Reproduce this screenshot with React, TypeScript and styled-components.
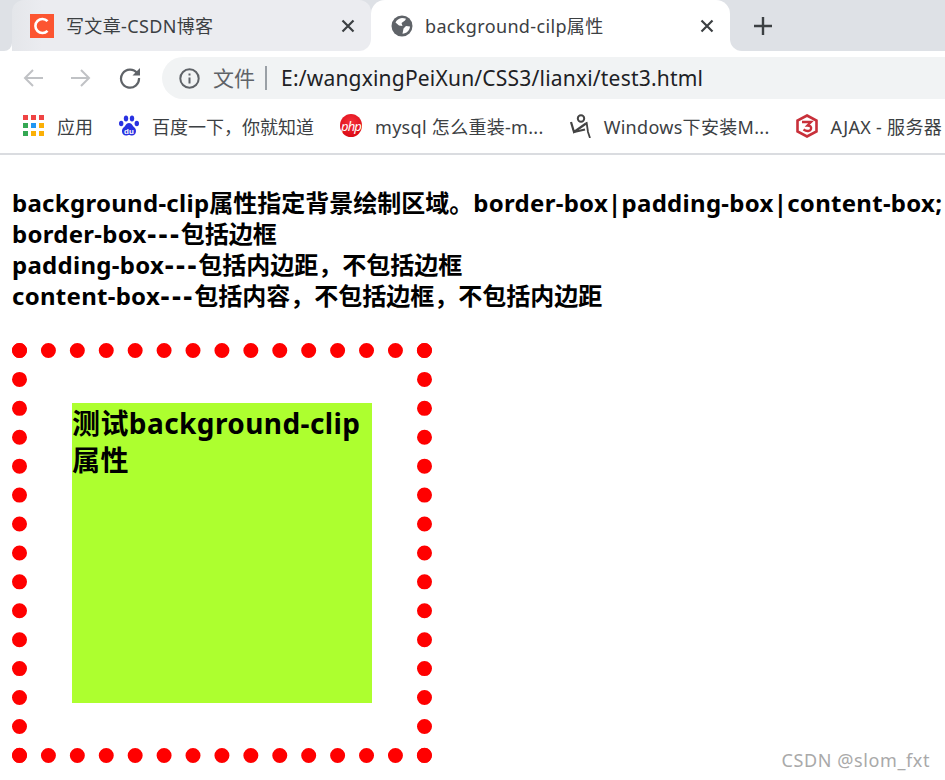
import React from "react";
import styled, { createGlobalStyle } from "styled-components";

const FONT = `"Noto Sans", "Noto Sans CJK SC", sans-serif`;

const GlobalStyle = createGlobalStyle`
  html, body {
    margin: 0;
    padding: 0;
    background: #fff;
  }
  body {
    font-family: ${FONT};
    overflow: hidden;
  }
`;

const Window = styled.div`
  position: relative;
  width: 945px;
  height: 780px;
  overflow: hidden;
  background: #fff;
`;

const TabStrip = styled.div`
  display: flex;
  height: 51px;
  background: linear-gradient(#dee1e6 38px, #fff 38px);
`;

const StripEdge = styled.div`
  width: 12px;
  background: #dee1e6;
  border-radius: 0 0 8px 0;
`;

const Tab = styled.div<{ $active?: boolean }>`
  display: flex;
  align-items: center;
  box-sizing: border-box;
  width: 359px;
  padding: 0 16px 0 ${(p) => (p.$active ? 20 : 18)}px;
  background: ${(p) =>
    p.$active ? "#fff" : "linear-gradient(90deg, #e4e6ea, #ebecf0 30px)"};
  border-radius: ${(p) => (p.$active ? "14px 14px 0 0" : "12px 12px 12px 0")};
`;

const TabTitle = styled.span`
  flex: 1;
  margin: 0 0 2px 12px;
  font-size: 18px;
  letter-spacing: 0.35px;
  color: #3c4043;
  white-space: nowrap;
`;

const StripRest = styled.div`
  flex: 1;
  display: flex;
  align-items: center;
  padding-left: 24px;
  background: #dee1e6;
  border-radius: 0 0 0 12px;
`;

const Toolbar = styled.div`
  display: flex;
  align-items: center;
  height: 57px;
  padding: 0 0 3px 23px;
  box-sizing: border-box;
`;

const NavIcons = styled.div`
  display: flex;
  align-items: center;
  gap: 28px;
  margin-right: 21px;
`;

const AddressBar = styled.div`
  flex: 1;
  display: flex;
  align-items: center;
  height: 42px;
  padding-left: 17px;
  background: #f1f3f4;
  border-radius: 21px 0 0 21px;
`;

const SchemeLabel = styled.span`
  margin-left: 13px;
  padding-right: 10px;
  font-size: 21px;
  line-height: 24px;
  color: #5f6368;
  border-right: 2px solid #9aa0a6;
`;

const UrlText = styled.span`
  margin-left: 14px;
  font-size: 21px;
  letter-spacing: 0.2px;
  color: #202124;
  white-space: nowrap;
`;

const BookmarkBar = styled.div`
  display: flex;
  align-items: center;
  gap: 26px;
  height: 47px;
  padding: 0 0 10px 23px;
  box-sizing: border-box;
  border-bottom: 2px solid #dadce0;
  overflow: hidden;
`;

const Bookmark = styled.div<{ $latin?: boolean }>`
  display: flex;
  align-items: center;
  flex-shrink: 0;
  gap: 13px;
  font-size: 18px;
  letter-spacing: ${(p) => (p.$latin ? "0.3px" : "0")};
  color: #3c4043;
  white-space: nowrap;
`;

const PhpBadge = styled.span`
  display: flex;
  align-items: center;
  justify-content: center;
  width: 22px;
  height: 23px;
  border-radius: 50%;
  background: radial-gradient(circle at 50% 35%, #f5303a, #d4000c);
  color: #fff;
  font-size: 13px;
  font-style: italic;
  letter-spacing: -0.8px;
`;

const Page = styled.main`
  padding: 32px 0 0 12px;
  color: #000;
  font-weight: 700;
`;

const Description = styled.p`
  margin: 0 0 32px;
  font-size: 24px;
  line-height: 31px;
  white-space: nowrap;
`;

const Latin = styled.span`
  letter-spacing: 0.28px;
`;

const Dashes = styled.span`
  font-family: "DejaVu Sans", sans-serif;
  line-height: 0;
  letter-spacing: 1.4px;
`;

const ClipDemo = styled.div`
  box-sizing: border-box;
  width: 420px;
  height: 420px;
  padding: 45px;
  border: 15px dotted #f00;
  background: #adff2f;
  background-clip: content-box;
  font-size: 28px;
  line-height: 37px;
`;

const ClipDemoText = styled.div`
  padding-top: 2px;
  letter-spacing: 0.42px;
`;

const Watermark = styled.span`
  position: absolute;
  right: 15px;
  bottom: 8px;
  font-size: 18px;
  color: #a9a9a9;
  letter-spacing: 0.6px;
`;

const CsdnIcon = () => (
  <svg width="24" height="24" viewBox="0 0 24 24">
    <rect width="24" height="24" fill="#fc5531" />
    <path d="M17.5 7.2A7 7 0 1 0 17.5 16.8" fill="none" stroke="#fff" strokeWidth="2.6" />
  </svg>
);

const GlobeIcon = () => (
  <svg width="22" height="22" viewBox="0 0 22 22">
    <circle cx="11" cy="11" r="10.5" fill="#5f6368" />
    <path
      d="M11 3C8 3.4 5.5 5 4.5 7.5L8 10.5 11.5 11 10.5 8 14 5.5 15 3.8C13.7 3.2 12.4 3 11 3ZM19 11.5L15 11 12.5 13.5 11.5 18.8C15.5 18.5 18.7 15.5 19 11.5Z"
      fill="#fff"
    />
  </svg>
);

const CloseIcon = () => (
  <svg width="14" height="14" viewBox="0 0 14 14">
    <path d="M1.5 1.5L12.5 12.5M12.5 1.5L1.5 12.5" stroke="#3c4043" strokeWidth="2.2" />
  </svg>
);

const PlusIcon = () => (
  <svg width="18" height="18" viewBox="0 0 18 18">
    <path d="M9 0V18M0 9H18" stroke="#3c4043" strokeWidth="2.4" />
  </svg>
);

const ArrowIcon = ({ flip }: { flip?: boolean }) => (
  <svg width="20" height="20" viewBox="0 0 20 20" style={flip ? { transform: "scaleX(-1)" } : undefined}>
    <path d="M20 10H2M10 2L2 10L10 18" fill="none" stroke="#c0c2c5" strokeWidth="2" />
  </svg>
);

const ReloadIcon = () => (
  <svg width="22" height="22" viewBox="0 0 22 22">
    <path d="M18.2 6.2A9 9 0 1 0 20 11" fill="none" stroke="#5f6368" strokeWidth="2.2" />
    <path d="M21 1V8.5H13.5Z" fill="#5f6368" />
  </svg>
);

const InfoIcon = () => (
  <svg width="21" height="21" viewBox="0 0 21 21">
    <circle cx="10.5" cy="10.5" r="9.2" fill="none" stroke="#5f6368" strokeWidth="2" />
    <path d="M10.5 9.5V15.5M10.5 5.5V7.6" stroke="#5f6368" strokeWidth="2" />
  </svg>
);

const APP_COLORS = [
  "#ef4444", "#ef4444", "#ef4444",
  "#34a853", "#2196f3", "#fbb006",
  "#34a853", "#fbb006", "#fbb006",
];

const AppsIcon = () => (
  <svg width="21" height="21" viewBox="0 0 21 21">
    {APP_COLORS.map((color, i) => (
      <rect key={i} x={(i % 3) * 8} y={Math.floor(i / 3) * 8} width="5" height="5" fill={color} />
    ))}
  </svg>
);

const BaiduIcon = () => (
  <svg width="20" height="22" viewBox="0 0 20 22">
    <g fill="#2932e1">
      <ellipse cx="7" cy="3.5" rx="2.2" ry="3" />
      <ellipse cx="13" cy="3.5" rx="2.2" ry="3" />
      <ellipse cx="2.2" cy="8.5" rx="2.2" ry="2.8" />
      <ellipse cx="17.8" cy="8.5" rx="2.2" ry="2.8" />
      <path d="M10 8C7 8 6.5 11 4.5 12.5 2 14.5 2.5 20.5 7 20.5 8.5 20.5 9 20 10 20S11.5 20.5 13 20.5C17.5 20.5 18 14.5 15.5 12.5 13.5 11 13 8 10 8Z" />
    </g>
    <text x="10" y="18.5" textAnchor="middle" fontSize="8" fontWeight="700" fill="#fff" fontFamily="Liberation Sans, sans-serif">du</text>
  </svg>
);

const FigureIcon = () => (
  <svg width="21" height="24" viewBox="0 0 21 24">
    <g fill="none" stroke="#444">
      <circle cx="11" cy="4.5" r="3.2" strokeWidth="2" />
      <path d="M1 8L4 18 16 9.5" strokeWidth="2.2" />
      <path d="M4 18L15 15.5" strokeWidth="2.2" />
      <path d="M16.5 8L18 18 20 24" strokeWidth="1.8" />
    </g>
  </svg>
);

const HexIcon = () => (
  <svg width="22" height="24" viewBox="0 0 22 24">
    <path d="M11 1.5L20.5 6.5V17.5L11 22.5 1.5 17.5V6.5Z" fill="none" stroke="#c8303a" strokeWidth="2.6" />
    <path d="M6 8H15L11.5 11.5C14.5 11.5 15.5 13 15 15 14.5 17 11 18 7.5 15.5" fill="none" stroke="#c8303a" strokeWidth="2.4" />
  </svg>
);

const BOOKMARKS = [
  { icon: <AppsIcon />, label: "应用", latin: false },
  { icon: <BaiduIcon />, label: "百度一下，你就知道", latin: false },
  { icon: <PhpBadge>php</PhpBadge>, label: "mysql 怎么重装-m...", latin: true },
  { icon: <FigureIcon />, label: "Windows下安装M...", latin: true },
  { icon: <HexIcon />, label: "AJAX - 服务器", latin: true },
];

export default function App() {
  return (
    <Window>
      <GlobalStyle />
      <TabStrip>
        <StripEdge />
        <Tab>
          <CsdnIcon />
          <TabTitle>写文章-CSDN博客</TabTitle>
          <CloseIcon />
        </Tab>
        <Tab $active>
          <GlobeIcon />
          <TabTitle>background-cilp属性</TabTitle>
          <CloseIcon />
        </Tab>
        <StripRest>
          <PlusIcon />
        </StripRest>
      </TabStrip>
      <Toolbar>
        <NavIcons>
          <ArrowIcon />
          <ArrowIcon flip />
          <ReloadIcon />
        </NavIcons>
        <AddressBar>
          <InfoIcon />
          <SchemeLabel>文件</SchemeLabel>
          <UrlText>E:/wangxingPeiXun/CSS3/lianxi/test3.html</UrlText>
        </AddressBar>
      </Toolbar>
      <BookmarkBar>
        {BOOKMARKS.map((b) => (
          <Bookmark key={b.label} $latin={b.latin}>
            {b.icon}
            {b.label}
          </Bookmark>
        ))}
      </BookmarkBar>
      <Page>
        <Description>
          <Latin>background-clip</Latin>属性指定背景绘制区域。
          <Latin>border-box|padding-box|content-box;</Latin>
          <br />
          <Latin>border-box</Latin>
          <Dashes>---</Dashes>包括边框
          <br />
          <Latin>padding-box</Latin>
          <Dashes>---</Dashes>包括内边距，不包括边框
          <br />
          <Latin>content-box</Latin>
          <Dashes>---</Dashes>包括内容，不包括边框，不包括内边距
        </Description>
        <ClipDemo>
          <ClipDemoText>测试background-clip属性</ClipDemoText>
        </ClipDemo>
      </Page>
      <Watermark>CSDN @slom_fxt</Watermark>
    </Window>
  );
}
